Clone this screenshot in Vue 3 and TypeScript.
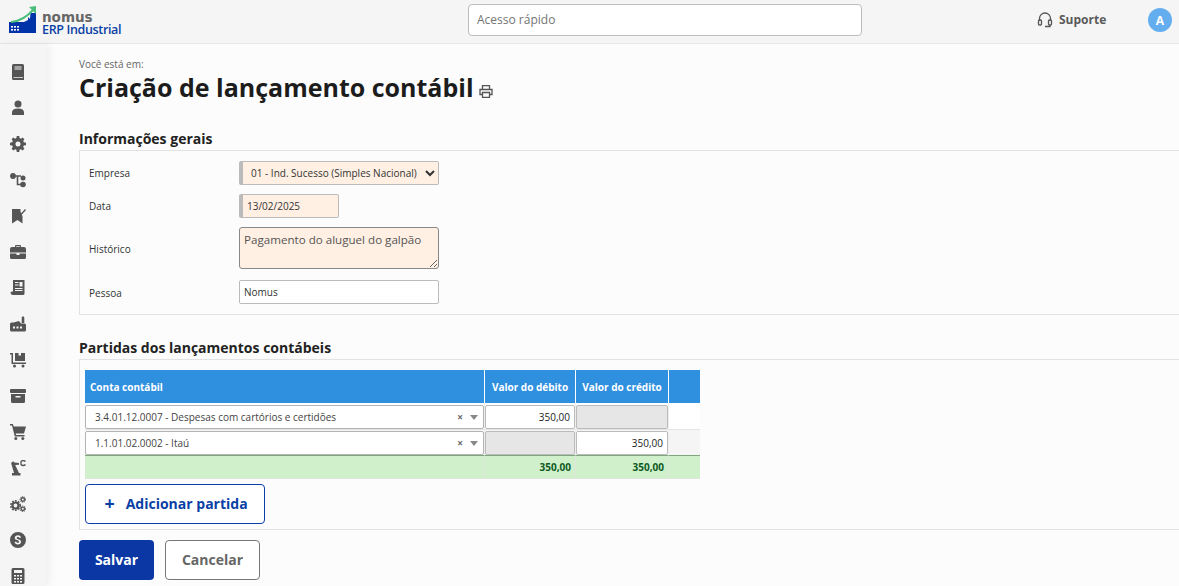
<script setup lang="ts">
const rows = [
  { conta: '3.4.01.12.0007 - Despesas com cartórios e certidões', debito: '350,00', credito: '' },
  { conta: '1.1.01.02.0002 - Itaú', debito: '', credito: '350,00' },
]
</script>

<template>
  <div class="page">
    <header class="topbar">
      <div class="logo">
        <svg width="28" height="28" viewBox="0 0 28 28">
          <path d="M0 16h15l4-2v-3l2 2 .5-6H27v20H0z" fill="#0033a8" />
          <path d="M2 16 C10 15.500 18 11 25 3" fill="none" stroke="#4dbd7c" stroke-width="2" />
          <path d="M20 1l7-1v8z" fill="#4dbd7c" />
          <g fill="#fff">
            <rect x="2" y="20" width="2" height="1.600" /><rect x="5" y="20" width="2" height="1.600" /><rect x="8" y="20" width="2" height="1.600" />
            <rect x="2" y="23" width="2" height="1.600" /><rect x="5" y="23" width="2" height="1.600" /><rect x="8" y="23" width="2" height="1.600" />
          </g>
        </svg>
        <div class="logo-text">
          <span class="logo-name">nomus</span>
          <span class="logo-sub">ERP Industrial</span>
        </div>
      </div>
      <input class="quick" placeholder="Acesso rápido" />
      <div class="support">
        <svg width="16" height="16" viewBox="0 0 16 16" fill="none" stroke="#555" stroke-width="1.3">
          <path d="M2.500 9V6.500a5.500 5.500 0 0 1 11 0V9" />
          <rect x="1.500" y="8" width="3" height="5" rx="1" />
          <rect x="11.500" y="8" width="3" height="5" rx="1" />
          <path d="M13 13v1.500H8" />
        </svg>
        <span>Suporte</span>
      </div>
      <div class="avatar">A</div>
    </header>

    <div class="body">
      <aside class="sidebar">
        <svg viewBox="0 0 16 16"><path d="M3.500 0h9A1.500 1.500 0 0 1 14 1.500V16H3.500A1.500 1.500 0 0 1 2 14.500v-13A1.500 1.500 0 0 1 3.500 0zM4.500 2.500v1h7v-1zm0 2v1h7v-1zM3.500 13v.8H13V13z" fill-rule="evenodd" /></svg>
        <svg viewBox="0 0 16 16"><circle cx="8" cy="4" r="3.500" /><path d="M2 15v-2.500C2 10 4 8.500 8 8.500s6 1.500 6 4V15z" /></svg>
        <svg viewBox="0 0 16 16"><path d="M6.800 0h2.400l.4 2.100 1.300.6L12.700 1.500l1.700 1.700-1.200 1.800.6 1.300 2.200.5v2.400l-2.200.4-.6 1.300 1.200 1.800-1.700 1.700-1.800-1.200-1.300.6-.4 2.200H6.800l-.4-2.200-1.300-.6-1.800 1.200-1.700-1.700 1.200-1.800-.6-1.300L0 9.200V6.800l2.200-.5.6-1.300-1.200-1.800 1.700-1.700 1.800 1.200 1.300-.6zM8 5.500a2.500 2.500 0 1 0 0 5 2.500 2.500 0 0 0 0-5z" fill-rule="evenodd" /></svg>
        <svg viewBox="0 0 16 16"><circle cx="3" cy="4" r="2.900" /><circle cx="13" cy="6" r="2.500" /><circle cx="13" cy="12.500" r="2.800" /><path d="M3 4h8M7.500 4v8.500H12" fill="none" stroke="#555" stroke-width="1.600" /></svg>
        <svg viewBox="0 0 16 16"><path d="M2 1h8.500v4L12.500 8v7.500L7.500 12l-5.500 3.500z" /><path d="M10 4.500l1.500 1.500L15.500 1.500" fill="none" stroke="#555" stroke-width="1.300" /></svg>
        <svg viewBox="0 0 16 16"><path d="M5 3V2a1 1 0 0 1 1-1h4a1 1 0 0 1 1 1v1h3a2 2 0 0 1 2 2v3.500H0V5a2 2 0 0 1 2-2zm1.200 0h3.600V2.200H6.200zM0 9.500h6.500v1.500h3V9.500H16v4A1.500 1.500 0 0 1 14.500 15h-13A1.500 1.500 0 0 1 0 13.500z" fill-rule="evenodd" /></svg>
        <svg viewBox="0 0 16 16"><path d="M3 0h11.500v13.500A1.500 1.500 0 0 1 13 15H3a2.500 2.500 0 0 1-2.500-2c0-1 1-1.500 2.500-1.500zm2 2v1h3.500V2zm0 2.500v1h3.500v-1zM9.500 2v4.500h3V2zM5 8v1h7.500V8zM5 10v1h7.500v-1z" fill-rule="evenodd" /></svg>
        <svg viewBox="0 0 16 16"><path d="M13 0l1.300 1.500v5.500h-2.600V1.500zM1.500 6.500h2L9 5l2 2.500h3.500A1.500 1.500 0 0 1 16 9v5a1.500 1.500 0 0 1-1.500 1.500h-13A1.500 1.500 0 0 1 0 14V8a1.500 1.500 0 0 1 1.500-1.500zM3 10.500v2h2v-2zm3.500 0v2h2v-2zm3.500 0v2h2v-2z" fill-rule="evenodd" /></svg>
        <svg viewBox="0 0 16 16"><path d="M0 1h3v9.500h13V12H1.500V2.500H0z" /><path d="M5 1h3.500v2.500H11V1h4v8H5z" /><circle cx="4.500" cy="14" r="1.500" /><circle cx="13" cy="14" r="1.500" /></svg>
        <svg viewBox="0 0 16 16"><rect x="0" y="1" width="16" height="4" rx="1" /><path d="M1 6h14v7.500a1.500 1.500 0 0 1-1.500 1.500h-11A1.500 1.500 0 0 1 1 13.500zm4.500 2v1.500h5V8z" fill-rule="evenodd" /></svg>
        <svg viewBox="0 0 16 16"><path d="M0 0h2.800l1 2.500H16l-2 7H5.700l.4 1.500H14.500v1.500H4.800L2 1.500H0z" /><circle cx="5.800" cy="14.500" r="1.500" /><circle cx="12.800" cy="14.500" r="1.500" /></svg>
        <svg viewBox="0 0 16 16"><path d="M2 15.500v-2.500h8.500v2.500zM4 13L1.500 4.500A1.800 1.800 0 0 1 4.500 2.500L9 3v1.800l-3.800.2L9 13z" /><path d="M15.500 1.500a3 3 0 0 0-4.500 0v3a3 3 0 0 0 4.500 0" fill="none" stroke="#555" stroke-width="1.300" /></svg>
        <svg viewBox="0 0 16 16"><circle cx="5.500" cy="9.500" r="3" fill="none" stroke="#555" stroke-width="2.200" /><circle cx="5.500" cy="9.500" r="4.700" fill="none" stroke="#555" stroke-width="1.600" stroke-dasharray="1.800 1.200" /><circle cx="12.800" cy="3.500" r="1.700" fill="none" stroke="#555" stroke-width="1.400" /><circle cx="12.800" cy="3.500" r="2.800" fill="none" stroke="#555" stroke-width="1" stroke-dasharray="1.200 .8" /><circle cx="12.800" cy="12.800" r="1.700" fill="none" stroke="#555" stroke-width="1.400" /><circle cx="12.800" cy="12.800" r="2.800" fill="none" stroke="#555" stroke-width="1" stroke-dasharray="1.200 .8" /></svg>
        <svg viewBox="0 0 16 16"><path d="M8 0a8 8 0 1 1 0 16A8 8 0 0 1 8 0zm3 5.500C10.600 4 9.400 3.200 8 3.200c-1.900 0-3.200 1-3.200 2.600 0 3.100 4.300 1.900 4.300 3.900 0 .7-.5 1.100-1.300 1.100-.9 0-1.500-.5-1.700-1.300l-1.500.4c.3 1.500 1.500 2.500 3.200 2.500 1.900 0 3.200-1 3.200-2.700 0-3-4.300-2-4.300-3.800 0-.6.5-1 1.300-1s1.300.4 1.500 1.100z" fill-rule="evenodd" /></svg>
        <svg viewBox="0 0 16 16"><path d="M3 0h10a1.500 1.500 0 0 1 1.500 1.500v13A1.500 1.500 0 0 1 13 16H3a1.500 1.500 0 0 1-1.500-1.500v-13A1.500 1.500 0 0 1 3 0zm1 2v3h8V2zm0 5v1.500h2V7zm3 0v1.500h2V7zm3 0v1.500h2V7zm-6 3v1.500h2V10zm3 0v1.500h2V10zm3 0v1.500h2V10zm-6 3v1.500h2V13zm3 0v1.500h2V13zm3 0v1.500h2V13z" fill-rule="evenodd" /></svg>
      </aside>

      <main class="main">
        <div class="crumb">Você está em:</div>
        <div class="title-row">
          <h1>Criação de lançamento contábil</h1>
          <svg class="printer" width="14" height="13" viewBox="0 0 14 13" fill="none" stroke="#555" stroke-width="1.300">
            <path d="M3.500 4V.700h7V4" />
            <path d="M3 9.500H1V4.500h12v5h-2" />
            <path d="M3.500 7.500h7v4.800h-7z" />
          </svg>
        </div>

        <h2 class="s1">Informações gerais</h2>
        <section class="box form">
          <label class="lbl lbl-a">Empresa</label>
          <div class="field">
            <select class="req sel">
              <option>01 - Ind. Sucesso (Simples Nacional)</option>
            </select>
          </div>
          <label class="lbl">Data</label>
          <div class="field"><input class="req date" value="13/02/2025" /></div>
          <label class="lbl lbl-c">Histórico</label>
          <div class="field"><textarea class="hist">Pagamento do aluguel do galpão</textarea></div>
          <label class="lbl lbl-d">Pessoa</label>
          <div class="field field-d"><input class="plain" value="Nomus" /></div>
        </section>

        <h2 class="s2">Partidas dos lançamentos contábeis</h2>
        <section class="box entries">
          <table>
            <colgroup>
              <col class="c1" /><col class="c2" /><col class="c3" /><col class="c4" />
            </colgroup>
            <thead>
              <tr>
                <th class="left">Conta contábil</th>
                <th>Valor do débito</th>
                <th>Valor do crédito</th>
                <th></th>
              </tr>
            </thead>
            <tbody>
              <tr v-for="(row, i) in rows" :key="i" :class="i === 0 ? 'first' : 'alt'">
                <td>
                  <div class="combo">
                    <span class="combo-text">{{ row.conta }}</span>
                    <span class="combo-x">×</span>
                    <span class="combo-arrow"></span>
                  </div>
                </td>
                <td><div class="amount" :class="{ off: !row.debito }">{{ row.debito }}</div></td>
                <td><div class="amount" :class="{ off: !row.credito }">{{ row.credito }}</div></td>
                <td></td>
              </tr>
            </tbody>
            <tfoot>
              <tr>
                <td></td>
                <td>350,00</td>
                <td>350,00</td>
                <td></td>
              </tr>
            </tfoot>
          </table>
          <button class="add"><span class="plus">+</span>Adicionar partida</button>
        </section>

        <div class="actions">
          <button class="save">Salvar</button>
          <button class="cancel">Cancelar</button>
        </div>
      </main>
    </div>
  </div>
</template>

<style>
html, body { margin: 0; overflow: hidden; background: #fcfcfc; }
</style>

<style scoped>
.page {
  width: 1179px;
  height: 586px;
  overflow: hidden;
  font-family: "Open Sans", "DejaVu Sans", sans-serif;
  color: #222;
  display: flex;
  flex-direction: column;
}
.topbar {
  flex: none;
  height: 43px;
  display: flex;
  align-items: center;
  background: #f5f5f5;
  border-bottom: 1px solid #e6e6e6;
}
.logo { flex: none; display: flex; align-items: flex-end; gap: 5px; margin-left: 9px; width: 459px; height: 28px; margin-top: -3px; }
.logo svg { flex: none; }
.logo-text { display: flex; flex-direction: column; margin-bottom: -2px; }
.logo-name { font-family: "DejaVu Sans", sans-serif; font-weight: 700; font-size: 13.500px; color: #666; line-height: 11px; }
.logo-sub { font-weight: 600; font-size: 12.500px; color: #0a3fa5; letter-spacing: -0.35px; line-height: 13px; }
.quick {
  width: 394px;
  height: 32px;
  box-sizing: border-box;
  border: 1px solid #bdbdbd;
  border-radius: 4px;
  background: #fff;
  padding: 0 8px 2px;
  font: 12px "Open Sans", sans-serif;
  margin-top: -3px;
}
.quick::placeholder { color: #757575; opacity: 1; }
.support {
  display: flex;
  align-items: center;
  gap: 6px;
  margin-left: 175px;
  font-size: 12px;
  font-weight: 700;
  color: #5a5a5a;
  margin-top: -4px;
  width: 111px;
}
.avatar {
  width: 24px;
  height: 24px;
  border-radius: 50%;
  background: #64aef0;
  color: #fff;
  font-size: 12px;
  font-weight: 700;
  display: flex;
  align-items: center;
  justify-content: center;
  margin-top: -3px;
}
.body { flex: 1; display: flex; min-height: 0; }
.sidebar {
  flex: none;
  width: 46px;
  background: #f5f5f5;
  display: flex;
  flex-direction: column;
  align-items: flex-start;
  padding: 20px 0 0 10px;
  box-sizing: border-box;
  gap: 20px;
  box-shadow: 4px 0 8px rgba(0, 0, 0, 0.05);
  position: relative;
}
.sidebar svg { flex: none; width: 16px; height: 16px; fill: #555; }
.main {
  flex: 1;
  min-width: 0;
  padding: 14px 0 0 33px;
  background: #fcfcfc;
}
.crumb { font-size: 10px; line-height: 13px; color: #666; }
.title-row { display: flex; align-items: flex-end; margin-top: 1px; height: 30px; }
h1 { margin: 0; font-size: 25px; line-height: 30px; font-weight: 700; color: #1c1c1c; white-space: nowrap; }
.printer { margin: 0 0 4px 5px; }
h2 { margin: 0; font-size: 14px; line-height: 19px; font-weight: 700; color: #222; }
.s1 { margin-top: 27px; }
.s2 { margin-top: 23px; }
.box {
  border: 1px solid #e2e2e2;
  border-right: 0;
  margin-top: 2px;
  box-sizing: border-box;
}
.form {
  height: 165px;
  padding: 10px 0 0 9px;
  display: grid;
  grid-template-columns: 150px 1fr;
  grid-template-rows: 24px 24px 42px 24px;
  row-gap: 9px;
  align-items: center;
}
.form .lbl { font-size: 10px; color: #333; }
.form .lbl-a { margin-top: -1px; }
.form .lbl-c { margin-top: 2px; }
.form .lbl-d { margin-top: 6px; }
.field { display: flex; align-items: center; }
.field-d { margin-top: 4px; }
.req, .hist, .plain {
  box-sizing: border-box;
  font-family: "Open Sans", sans-serif;
  color: #333;
  border: 1px solid #bbb;
  border-radius: 2px;
}
.sel {
  width: 200px;
  height: 24px;
  font-size: 10px;
  padding: 0 0 0 4px;
  background: #fff0e3;
  border-left: 4px solid #bbb;
}
.date {
  width: 100px;
  height: 24px;
  font-size: 10px;
  padding: 0 0 0 4px;
  background: #fff0e3;
  border-left: 4px solid #bbb;
}
.hist {
  width: 200px;
  height: 42px;
  font-size: 11.600px;
  line-height: 16px;
  padding: 4px 4px 2px;
  background: #fff0e3;
  border: 1px solid #888;
  border-radius: 3px;
  color: #555;
  display: block;
}
.plain {
  width: 200px;
  height: 24px;
  font-size: 10px;
  padding: 0 4px;
  background: #fff;
}
.entries { height: 171px; padding: 10px 0 0 5px; }
table {
  width: 615px;
  table-layout: fixed;
  border-collapse: separate;
  border-spacing: 0;
}
.c1 { width: 400px; }
.c2 { width: 91px; }
.c3 { width: 93px; }
.c4 { width: 31px; }
thead th {
  height: 33px;
  padding: 0 5px;
  background: #3090e0;
  color: #fff;
  font-size: 10px;
  font-weight: 700;
  text-align: center;
  border-right: 1px solid #fff;
  box-sizing: border-box;
}
thead th:last-child { border-right: 0; }
thead th.left { text-align: left; }
tbody td {
  box-sizing: border-box;
  border-right: 1px solid #eee;
  background: #fff;
  vertical-align: top;
}
tbody tr.first td { height: 27px; padding: 2px 0 0; border-bottom: 1px solid #e4e4e4; }
tbody tr.alt td { height: 25px; padding: 1px 0 0; background: #f5f5f5; }
tbody td:last-child { border-right: 0; }
.combo {
  height: 24px;
  box-sizing: border-box;
  border: 1px solid #b4b4b4;
  border-radius: 2px;
  background: #fff;
  display: flex;
  align-items: center;
  padding: 0 4px 0 9px;
  font-size: 10px;
  color: #444;
}
.combo-text { flex: 1; white-space: nowrap; }
.combo-x { font-size: 10px; font-weight: 700; color: #666; margin-right: 7px; }
.combo-arrow {
  width: 0;
  height: 0;
  border-left: 4px solid transparent;
  border-right: 4px solid transparent;
  border-top: 5px solid #888;
  margin-right: 1px;
}
.amount {
  height: 24px;
  box-sizing: border-box;
  border: 1px solid #bbb;
  border-radius: 2px;
  background: #fff;
  font-size: 10px;
  line-height: 22px;
  text-align: right;
  padding-right: 4px;
  color: #222;
}
.amount.off { background: #e6e6e6; }
tfoot td {
  height: 24px;
  box-sizing: border-box;
  background: #d0f0cc;
  border-top: 1px solid #7fa67d;
  border-right: 1px solid #e0e6dd;
  border-bottom: 1px solid #dfe6dc;
  text-align: right;
  font-size: 10px;
  font-weight: 700;
  color: #0e5a1e;
  padding: 0 4px 0 0;
}
tfoot td:last-child { border-right: 0; }
.add {
  display: flex;
  align-items: center;
  justify-content: center;
  width: 180px;
  height: 40px;
  margin-top: 5px;
  padding: 0 0 2px 2px;
  box-sizing: border-box;
  border: 1px solid #0a3fa5;
  border-radius: 4px;
  background: #fff;
  color: #0a3fa5;
  font: 700 14px "Open Sans", sans-serif;
}
.plus { font-size: 18px; font-weight: 700; margin-right: 11px; line-height: 18px; }
.actions { display: flex; gap: 11px; margin-top: 10px; }
.save, .cancel {
  height: 40px;
  box-sizing: border-box;
  border-radius: 4px;
  padding: 0 0 2px;
  font: 700 14px "Open Sans", sans-serif;
}
.save { width: 75px; border: 0; background: #0a37a4; color: #fff; }
.cancel { width: 95px; border: 1px solid #777; background: #fff; color: #666; }
</style>
